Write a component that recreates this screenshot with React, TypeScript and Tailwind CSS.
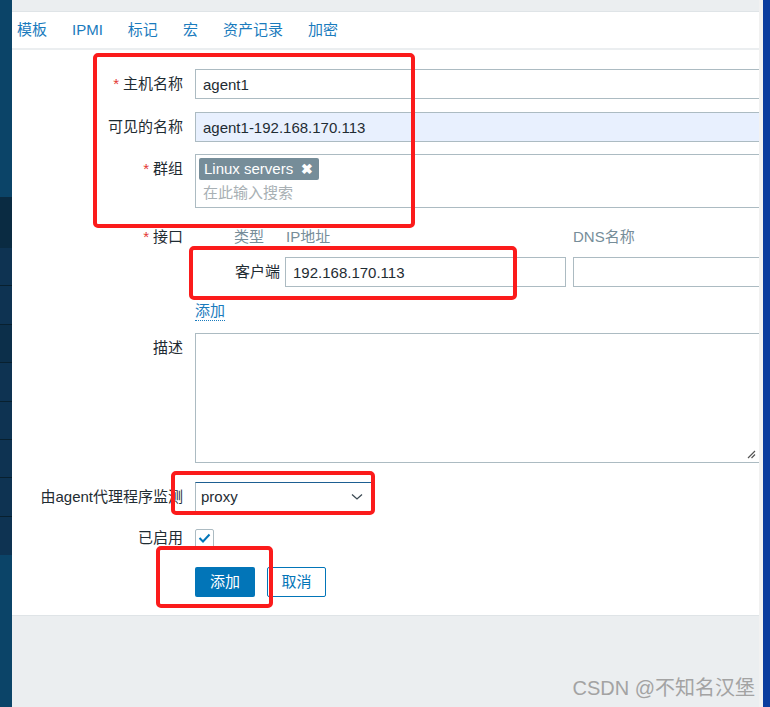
import React from 'react';

const Label: React.FC<{ text: string; required?: boolean }> = ({ text, required }) => (
  <div className="w-[171px] shrink-0 h-[30px] leading-[30px] text-right whitespace-nowrap">
    {required && <span className="text-[#e33734] mr-[4px]">*</span>}
    {text}
  </div>
);

const Sidebar = () => (
  <div className="w-[12px] shrink-0 flex flex-col bg-[#0b4468]">
    <div className="h-[197px] bg-[#0b4468]" />
    <div className="h-[51px] bg-[#0a2b42]" />
    <div className="h-[38px] bg-[#0e3352] border-b border-[#08202f]" />
    <div className="h-[39px] bg-[#0e3352] border-b border-[#08202f]" />
    <div className="h-[38px] bg-[#0c2f4a] border-b border-[#08202f]" />
    <div className="h-[39px] bg-[#0e3352] border-b border-[#08202f]" />
    <div className="h-[38px] bg-[#0e3352] border-b border-[#08202f]" />
    <div className="h-[38px] bg-[#0e3352] border-b border-[#08202f]" />
    <div className="h-[39px] bg-[#0e3352] border-b border-[#08202f]" />
    <div className="h-[38px] bg-[#0e3352]" />
    <div className="flex-1 bg-[#0b4468]" />
  </div>
);

const tabs = ['模板', 'IPMI', '标记', '宏', '资产记录', '加密'];

export default function App() {
  return (
    <div className="relative w-[770px] h-[707px] flex overflow-hidden bg-white text-[15px] text-[#1f2c33] font-['Liberation_Sans','Noto_Sans_CJK_SC',sans-serif]">
      <Sidebar />

      <main className="w-[747px] shrink-0 flex flex-col overflow-hidden">
        <div className="h-[12px] shrink-0 bg-[#ebeef0] border-b border-[#dfe4e7]" />
        <div className="h-[38px] shrink-0 border-b-2 border-[#ebeef0] flex items-center pl-[5px] gap-[25px] text-[#1a7bbd]">
          {tabs.map((t) => (
            <span key={t}>{t}</span>
          ))}
        </div>

        {/* form */}
        <div className="h-[565px] shrink-0 pt-[19px] flex flex-col">
          <div className="flex gap-[12px]">
            <Label text="主机名称" required />
            <div className="w-[600px] h-[30px] shrink-0 border border-[#acbbc2] px-[7px] leading-[29px]">agent1</div>
          </div>

          <div className="flex gap-[12px] mt-[13px]">
            <Label text="可见的名称" />
            <div className="w-[600px] h-[30px] shrink-0 border border-[#acbbc2] bg-[#e8f0fe] px-[7px] leading-[29px]">agent1-192.168.170.113</div>
          </div>

          <div className="flex gap-[12px] mt-[12px]">
            <Label text="群组" required />
            <div className="w-[600px] h-[54px] shrink-0 border border-[#acbbc2] pl-[3px] pt-[3px] flex flex-col">
              <div className="self-start h-[22px] flex items-center gap-[8px] bg-[#768d99] text-white rounded-[2px] pl-[5px] pr-[6px]">
                <span>Linux servers</span>
                <span className="text-[14px] font-bold leading-none">✖</span>
              </div>
              <div className="pl-[4px] mt-[2px] leading-[22px] text-[#a8b0b4]">在此输入搜索</div>
            </div>
          </div>

          <div className="flex gap-[12px] mt-[14px]">
            <Label text="接口" required />
            <div className="flex flex-col">
              <div className="h-[30px] flex items-center pl-[39px] text-[#768d99]">
                <span className="w-[52px]">类型</span>
                <span className="w-[287px]">IP地址</span>
                <span>DNS名称</span>
              </div>
              <div className="flex items-center mt-[5px] pl-[39px]">
                <span className="w-[46px] text-right">客户端</span>
                <div className="ml-[5px] w-[281px] h-[30px] border border-[#acbbc2] px-[7px] leading-[29px]">192.168.170.113</div>
                <div className="ml-[7px] w-[260px] h-[30px] shrink-0 border border-[#acbbc2]" />
              </div>
              <div className="mt-[9px] h-[30px] leading-[30px]">
                <span className="text-[#1a7bbd] border-b border-dotted border-[#1a7bbd] leading-[18px] inline-block">添加</span>
              </div>
            </div>
          </div>

          <div className="flex gap-[12px] mt-[7px]">
            <Label text="描述" />
            <div className="w-[566px] h-[130px] shrink-0 border border-[#acbbc2] flex items-end justify-end pr-[4px] pb-[3px]">
              <svg width="9" height="9" viewBox="0 0 9 9">
                <path d="M1 8 L8 1 M4.5 8 L8 4.5" stroke="#555" strokeWidth="1.2" />
              </svg>
            </div>
          </div>

          <div className="flex gap-[12px] mt-[19px]">
            <Label text="由agent代理程序监测" />
            <div className="w-[177px] h-[30px] shrink-0 border border-[#acbbc2] border-t-[#1d5f92] flex items-center justify-between pl-[5px] pr-[8px]">
              <span>proxy</span>
              <svg width="12" height="8" viewBox="0 0 12 8">
                <path d="M1 1.5 L6 6 L11 1.5" fill="none" stroke="#3d4b54" strokeWidth="1.3" />
              </svg>
            </div>
          </div>

          <div className="flex gap-[12px] mt-[11px] items-center">
            <Label text="已启用" />
            <div className="w-[19px] h-[19px] border border-[#acbbc2] rounded-[2px] flex items-center justify-center">
              <svg width="13" height="10" viewBox="0 0 13 10">
                <path d="M1.5 5 L5 8.5 L11.5 1.5" fill="none" stroke="#0275b8" strokeWidth="2" />
              </svg>
            </div>
          </div>

          <div className="flex gap-[12px] mt-[14px] pl-[183px]">
            <button className="w-[60px] h-[30px] bg-[#0275b8] text-white rounded-[2px]">添加</button>
            <button className="w-[59px] h-[30px] border border-[#0275b8] text-[#0275b8] bg-white rounded-[2px]">取消</button>
          </div>
        </div>

        <div className="flex-1 bg-[#ebeef0] border-t border-[#dfe4e7]" />
      </main>

      <div className="w-[4px] shrink-0 bg-[#f1f1f1]" />
      <div className="w-[7px] shrink-0 bg-[#0a3c9e]" />

      {/* red annotation boxes */}
      <div className="absolute left-[93px] top-[53px] w-[322px] h-[175px] border-[4px] border-[#fb1b1b] rounded-[5px]" />
      <div className="absolute left-[189px] top-[246px] w-[328px] h-[54px] border-[4px] border-[#fb1b1b] rounded-[5px]" />
      <div className="absolute left-[171px] top-[471px] w-[204px] h-[44px] border-[4px] border-[#fb1b1b] rounded-[5px]" />
      <div className="absolute left-[156px] top-[546px] w-[117px] h-[62px] border-[4px] border-[#fb1b1b] rounded-[5px]" />

      <div className="absolute right-[15px] top-[676px] text-[20px] leading-[24px] font-normal text-[#a3a3a3]">
        CSDN @不知名汉堡
      </div>
    </div>
  );
}
